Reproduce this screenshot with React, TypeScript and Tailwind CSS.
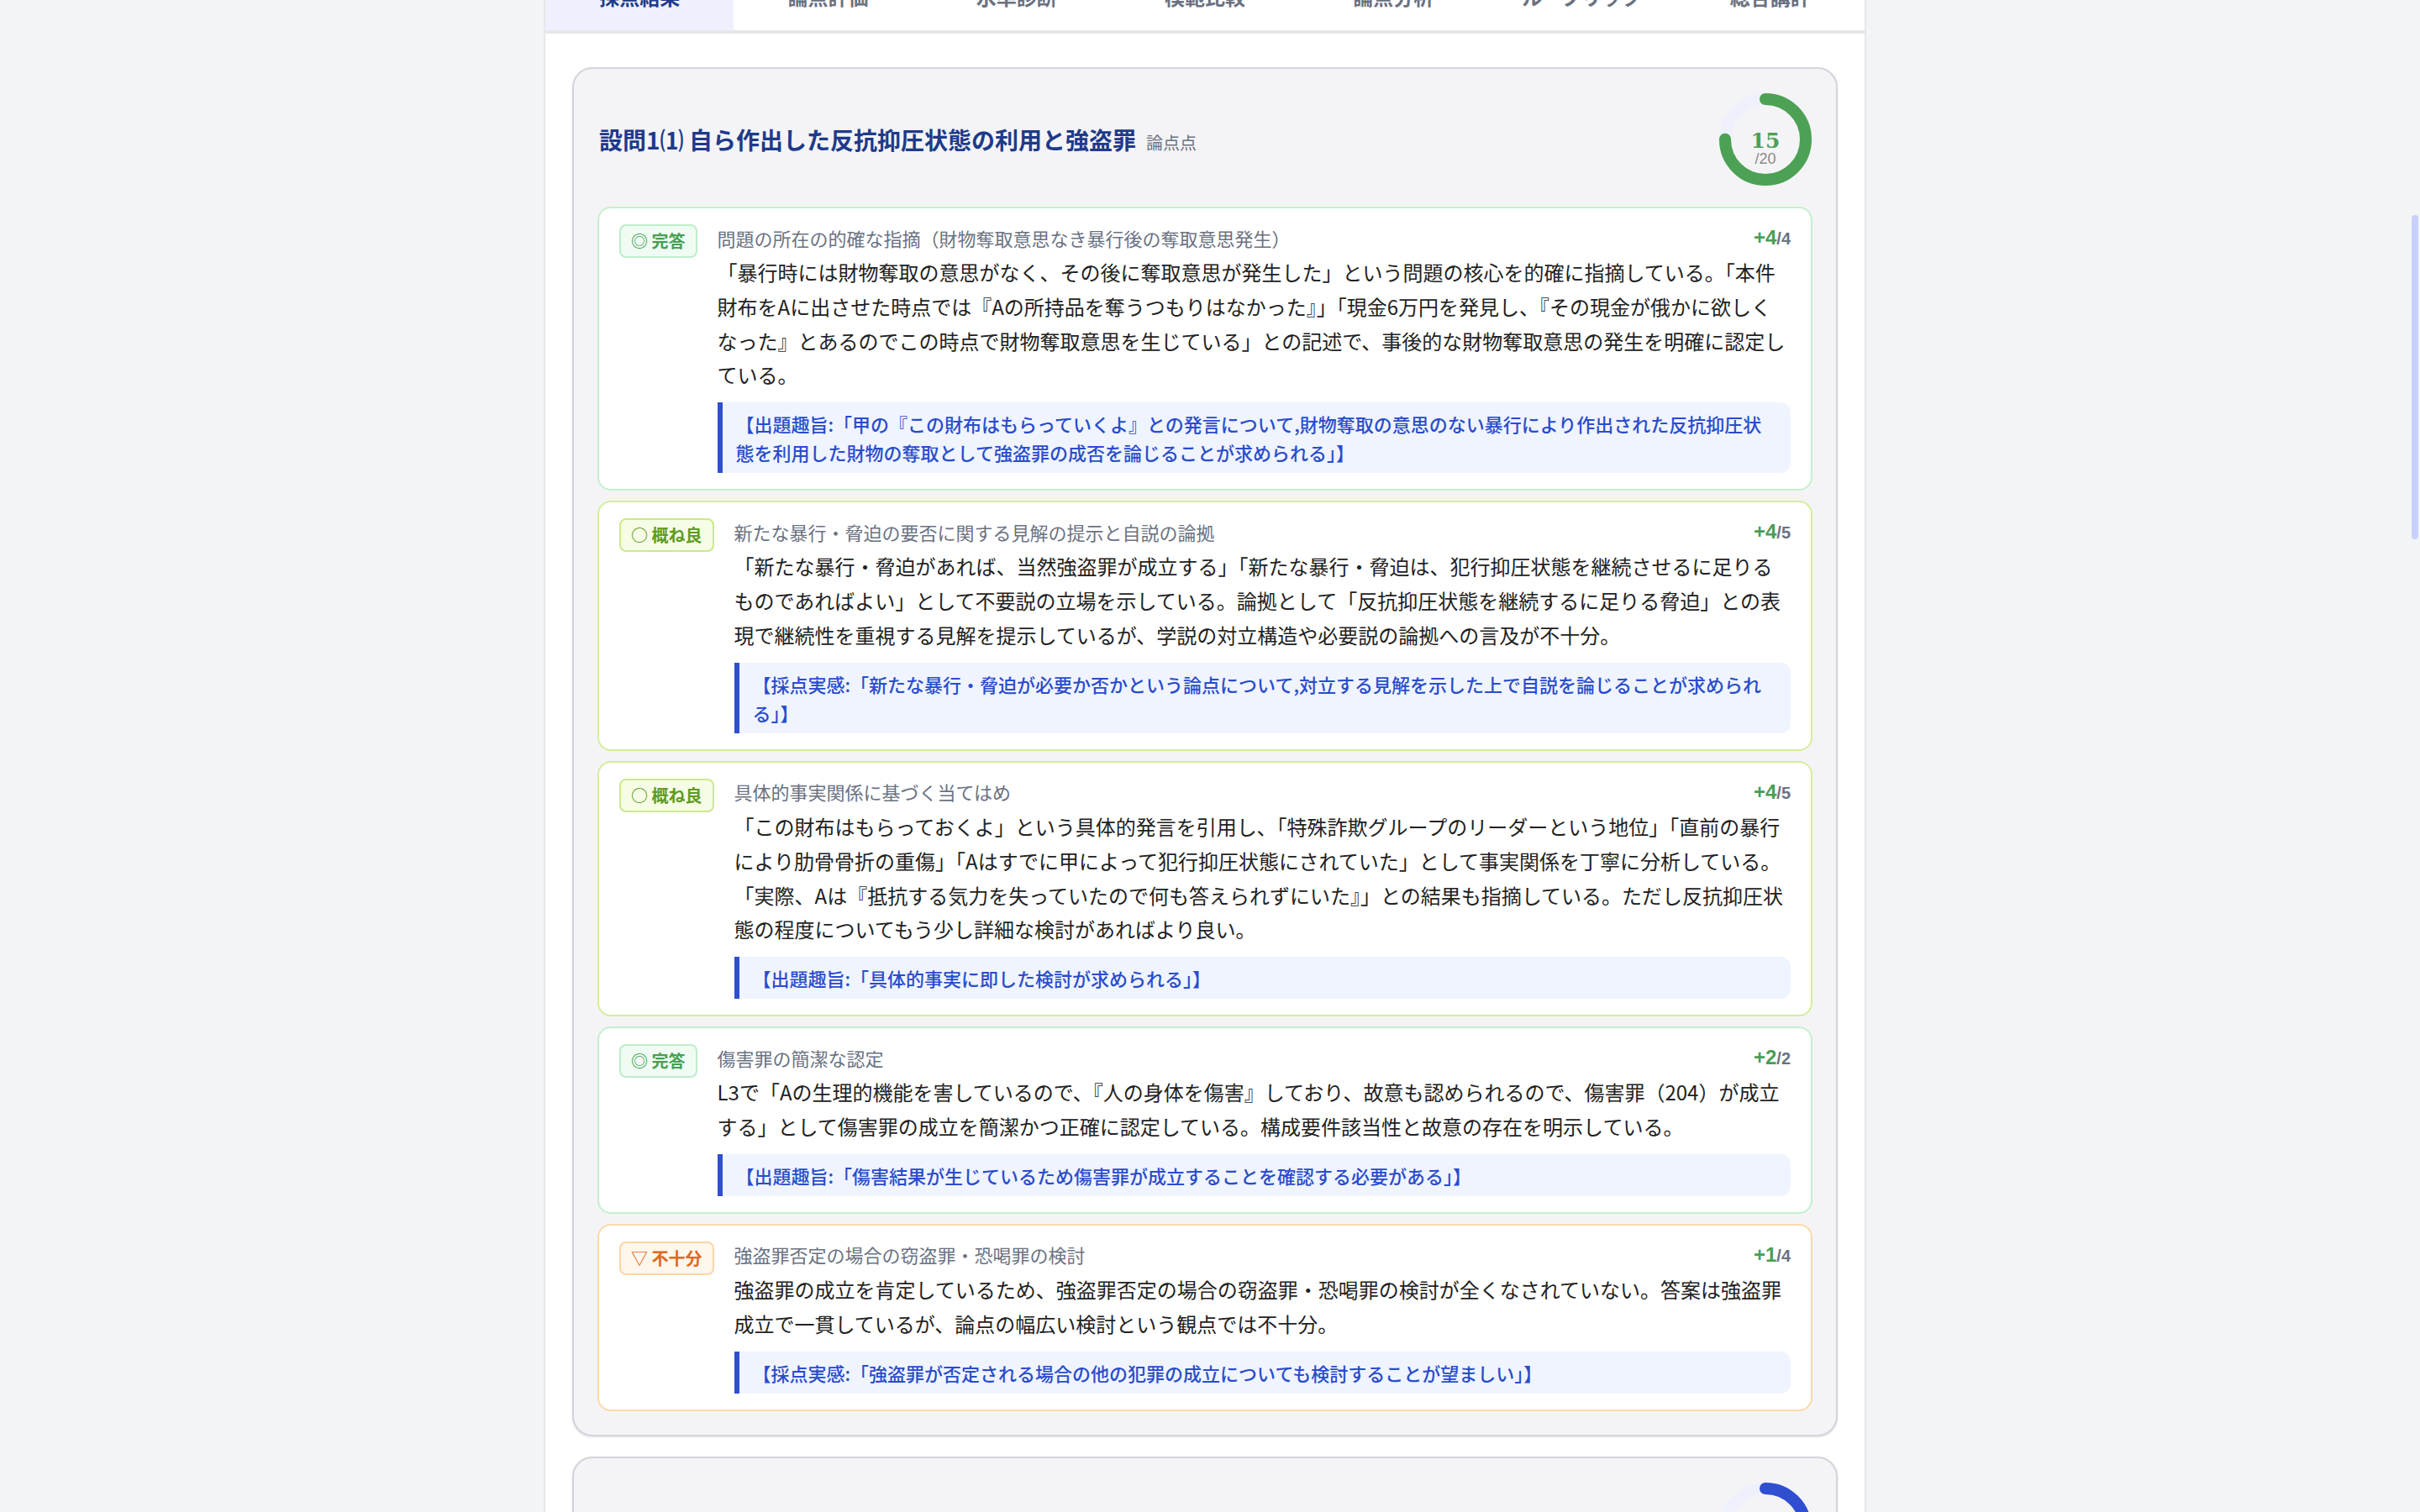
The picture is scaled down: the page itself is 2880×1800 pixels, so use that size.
import React from 'react';

type Grade = 'full' | 'good' | 'weak';

type Point = {
  grade: Grade;
  title: string;
  score: number;
  max: number;
  body: string;
  note: string;
};

const gradeStyle: Record<Grade, { label: string; card: string; badge: string }> = {
  full: {
    label: '◎ 完答',
    card: 'border-[#c3f0cd]',
    badge: 'bg-[#f0fcf3] border-[#bfeccb] text-[#46a053]',
  },
  good: {
    label: '○ 概ね良',
    card: 'border-[#d3ee97]',
    badge: 'bg-[#f6fde6] border-[#cde88b] text-[#5f9b22]',
  },
  weak: {
    label: '▽ 不十分',
    card: 'border-[#fbd9a9]',
    badge: 'bg-[#fff6ec] border-[#fbd6a6] text-[#dd6a1e]',
  },
};

const points: Point[] = [
  {
    grade: 'full',
    title: '問題の所在の的確な指摘（財物奪取意思なき暴行後の奪取意思発生）',
    score: 4,
    max: 4,
    body:
      '「暴行時には財物奪取の意思がなく、その後に奪取意思が発生した」という問題の核心を的確に指摘している。「本件財布をAに出させた時点では『Aの所持品を奪うつもりはなかった』」「現金6万円を発見し、『その現金が俄かに欲しくなった』とあるのでこの時点で財物奪取意思を生じている」との記述で、事後的な財物奪取意思の発生を明確に認定している。',
    note:
      '【出題趣旨:「甲の『この財布はもらっていくよ』との発言について,財物奪取の意思のない暴行により作出された反抗抑圧状態を利用した財物の奪取として強盗罪の成否を論じることが求められる」】',
  },
  {
    grade: 'good',
    title: '新たな暴行・脅迫の要否に関する見解の提示と自説の論拠',
    score: 4,
    max: 5,
    body:
      '「新たな暴行・脅迫があれば、当然強盗罪が成立する」「新たな暴行・脅迫は、犯行抑圧状態を継続させるに足りるものであればよい」として不要説の立場を示している。論拠として「反抗抑圧状態を継続するに足りる脅迫」との表現で継続性を重視する見解を提示しているが、学説の対立構造や必要説の論拠への言及が不十分。',
    note:
      '【採点実感:「新たな暴行・脅迫が必要か否かという論点について,対立する見解を示した上で自説を論じることが求められる」】',
  },
  {
    grade: 'good',
    title: '具体的事実関係に基づく当てはめ',
    score: 4,
    max: 5,
    body:
      '「この財布はもらっておくよ」という具体的発言を引用し、「特殊詐欺グループのリーダーという地位」「直前の暴行により肋骨骨折の重傷」「Aはすでに甲によって犯行抑圧状態にされていた」として事実関係を丁寧に分析している。「実際、Aは『抵抗する気力を失っていたので何も答えられずにいた』」との結果も指摘している。ただし反抗抑圧状態の程度についてもう少し詳細な検討があればより良い。',
    note: '【出題趣旨:「具体的事実に即した検討が求められる」】',
  },
  {
    grade: 'full',
    title: '傷害罪の簡潔な認定',
    score: 2,
    max: 2,
    body:
      'L3で「Aの生理的機能を害しているので、『人の身体を傷害』しており、故意も認められるので、傷害罪（204）が成立する」として傷害罪の成立を簡潔かつ正確に認定している。構成要件該当性と故意の存在を明示している。',
    note: '【出題趣旨:「傷害結果が生じているため傷害罪が成立することを確認する必要がある」】',
  },
  {
    grade: 'weak',
    title: '強盗罪否定の場合の窃盗罪・恐喝罪の検討',
    score: 1,
    max: 4,
    body:
      '強盗罪の成立を肯定しているため、強盗罪否定の場合の窃盗罪・恐喝罪の検討が全くなされていない。答案は強盗罪成立で一貫しているが、論点の幅広い検討という観点では不十分。',
    note: '【採点実感:「強盗罪が否定される場合の他の犯罪の成立についても検討することが望ましい」】',
  },
];

const tabs = ['採点結果', '論点評価', '水準診断', '模範比較', '論点分析', 'ルーブリック', '総合講評'];

const ScoreRing = ({ value, max, color }: { value: number; max: number; color: string }) => {
  const r = 48;
  const c = 2 * Math.PI * r;
  return (
    <svg width="112" height="112" viewBox="0 0 112 112" className="shrink-0">
      <circle cx="56" cy="56" r={r} fill="none" stroke="#eef0fc" strokeWidth="14" />
      <circle
        cx="56"
        cy="56"
        r={r}
        fill="none"
        stroke={color}
        strokeWidth="14"
        strokeLinecap="round"
        strokeDasharray={`${(c * value) / max} ${c}`}
        transform="rotate(-90 56 56)"
      />
      <text
        x="56"
        y="66"
        textAnchor="middle"
        fontFamily="'DejaVu Serif', serif"
        fontWeight="700"
        fontSize="25"
        fill={color}
      >
        {value}
      </text>
      <text x="56" y="85" textAnchor="middle" fontFamily="'Liberation Sans', sans-serif" fontSize="18" fill="#8a8a8a">
        /{max}
      </text>
    </svg>
  );
};

const PointRow = ({ p }: { p: Point }) => {
  const g = gradeStyle[p.grade];
  return (
    <div className={`flex items-start gap-6 rounded-2xl border-2 bg-white px-6 py-[19px] ${g.card}`}>
      <span className={`shrink-0 rounded-lg border-2 px-3 text-[20px] font-bold leading-[36px] ${g.badge}`}>
        {g.label}
      </span>
      <div className="min-w-0 flex-1">
        <div className="flex items-center justify-between gap-4">
          <p className="-mt-0.5 text-[22px] leading-8 text-gray-500">{p.title}</p>
          <p className="font-['Liberation_Sans',sans-serif] text-2xl font-bold leading-8">
            <span className="text-[#4a9e55]">+{p.score}</span>
            <span className="text-[20px] text-gray-500">/{p.max}</span>
          </p>
        </div>
        <p className="mt-1 text-2xl leading-[1.7] text-[#222]">{p.body}</p>
        <p className="mt-3 rounded-r-xl border-l-[6px] border-[#2f4fd0] bg-[#eff4ff] px-4 py-2 text-[22px] font-medium leading-[1.55] text-[#2a4ccc]">
          {p.note}
        </p>
      </div>
    </div>
  );
};

export default function App() {
  return (
    <div className="flex h-screen overflow-hidden bg-[#f3f4f6] font-['Noto_Sans_CJK_JP',sans-serif]">
      <div className="flex flex-1 justify-center">
        <main className="-mt-[44px] w-[1574px] border-x-2 border-gray-200 bg-white">
          <nav className="flex border-b-4 border-gray-200">
            {tabs.map((t, i) => (
              <div
                key={t}
                className={
                  i === 0
                    ? 'flex-1 bg-[#eef1fd] py-6 text-center text-2xl font-bold leading-8 text-[#1e3a8a]'
                    : 'flex-1 py-6 text-center text-2xl font-semibold leading-8 text-gray-500'
                }
              >
                {t}
              </div>
            ))}
          </nav>

          <div className="space-y-6 px-8 pt-10">
            <section className="rounded-3xl border-2 border-gray-300 bg-[#f4f4f6] px-7 pt-7 pb-7 shadow-sm">
              <header className="mb-6 flex items-center justify-between">
                <h2 className="ml-0.5 flex items-baseline gap-3 text-[28px] font-bold text-[#1e3a8a]">
                  設問1⑴ 自ら作出した反抗抑圧状態の利用と強盗罪
                  <span className="text-[20px] font-normal text-gray-500">論点点</span>
                </h2>
                <ScoreRing value={15} max={20} color="#4ca154" />
              </header>
              <div className="space-y-3">
                {points.map((p) => (
                  <PointRow key={p.title} p={p} />
                ))}
              </div>
            </section>

            <section className="rounded-3xl border-2 border-gray-300 bg-[#f4f4f6] px-7 pt-7 pb-7 shadow-sm">
              <header className="mb-6 flex items-center justify-between">
                <h2 className="ml-0.5 flex items-baseline gap-3 text-[28px] font-bold text-[#1e3a8a]">
                  設問1⑵ 乙の罪責と共犯関係の成否
                  <span className="text-[20px] font-normal text-gray-500">論点点</span>
                </h2>
                <ScoreRing value={13} max={20} color="#2f4fd0" />
              </header>
            </section>
          </div>
        </main>
      </div>
      <div className="flex w-3 justify-center pt-[256px]">
        <div className="h-[386px] w-2 rounded-full bg-[#c8d1fb]" />
      </div>
    </div>
  );
}
